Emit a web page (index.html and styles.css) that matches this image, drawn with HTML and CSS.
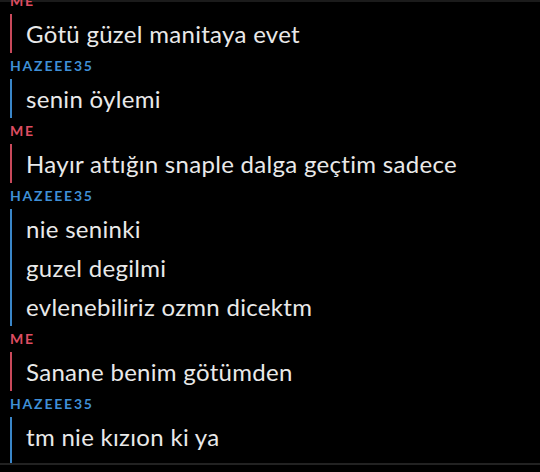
FILE: index.html
```html
<!DOCTYPE html>
<html lang="tr">
<head>
  <meta charset="UTF-8" />
  <meta name="viewport" content="width=device-width, initial-scale=1.0" />
  <title>Sohbet</title>
  <link rel="stylesheet" href="styles.css">
</head>
<body>
  <div class="top-line"></div>

  <main class="chat">
    <section class="group me">
      <div class="name">ME</div>
      <div class="msgs">
        <p>Götü güzel manitaya evet</p>
      </div>
    </section>

    <section class="group them">
      <div class="name">HAZEEE35</div>
      <div class="msgs">
        <p>senin öylemi</p>
      </div>
    </section>

    <section class="group me">
      <div class="name">ME</div>
      <div class="msgs">
        <p>Hayır attığın snaple dalga geçtim sadece</p>
      </div>
    </section>

    <section class="group them">
      <div class="name">HAZEEE35</div>
      <div class="msgs">
        <p>nie seninki</p>
        <p>guzel degilmi</p>
        <p>evlenebiliriz ozmn dicektm</p>
      </div>
    </section>

    <section class="group me">
      <div class="name">ME</div>
      <div class="msgs">
        <p>Sanane benim götümden</p>
      </div>
    </section>

    <section class="group them last">
      <div class="name">HAZEEE35</div>
      <div class="msgs">
        <p>tm nie kızıon ki ya</p>
      </div>
    </section>
  </main>

  <div class="bottom-line"></div>
</body>
</html>
```

FILE: styles.css
```css
html {
  background-color: #000000;
  overflow: hidden;
}
body {
  margin: 0;
  padding: 0;
  background-color: #000000;
  color: #e9e9e9;
  font-family: Lato, 'Noto Sans', sans-serif;
  height: 472px;
  overflow: hidden;
}
.top-line {
  height: 2px;
  background-color: #1b1b1b;
}
.chat {
  margin-top: -14px;
  height: 475px;
  overflow: hidden;
}
.name {
  height: 26px;
  box-sizing: border-box;
  padding-top: 6px;
  margin-left: 10px;
  font-size: 14px;
  line-height: 14px;
  font-weight: bold;
  letter-spacing: 1.8px;
}
.msgs {
  margin-left: 10px;
  padding-left: 14px;
  border-left: 2px solid;
}
.msgs p {
  margin: 0;
  font-size: 24px;
  line-height: 39px;
  letter-spacing: 0.3px;
}
.me .name {
  color: #de4d62;
}
.me .msgs {
  border-left-color: #c9495b;
}
.them .name {
  color: #3f8fd6;
}
.them .msgs {
  border-left-color: #3a86c9;
}
.last .msgs {
  padding-bottom: 12px;
}
.bottom-line {
  height: 2px;
  background-color: #222222;
}
```
